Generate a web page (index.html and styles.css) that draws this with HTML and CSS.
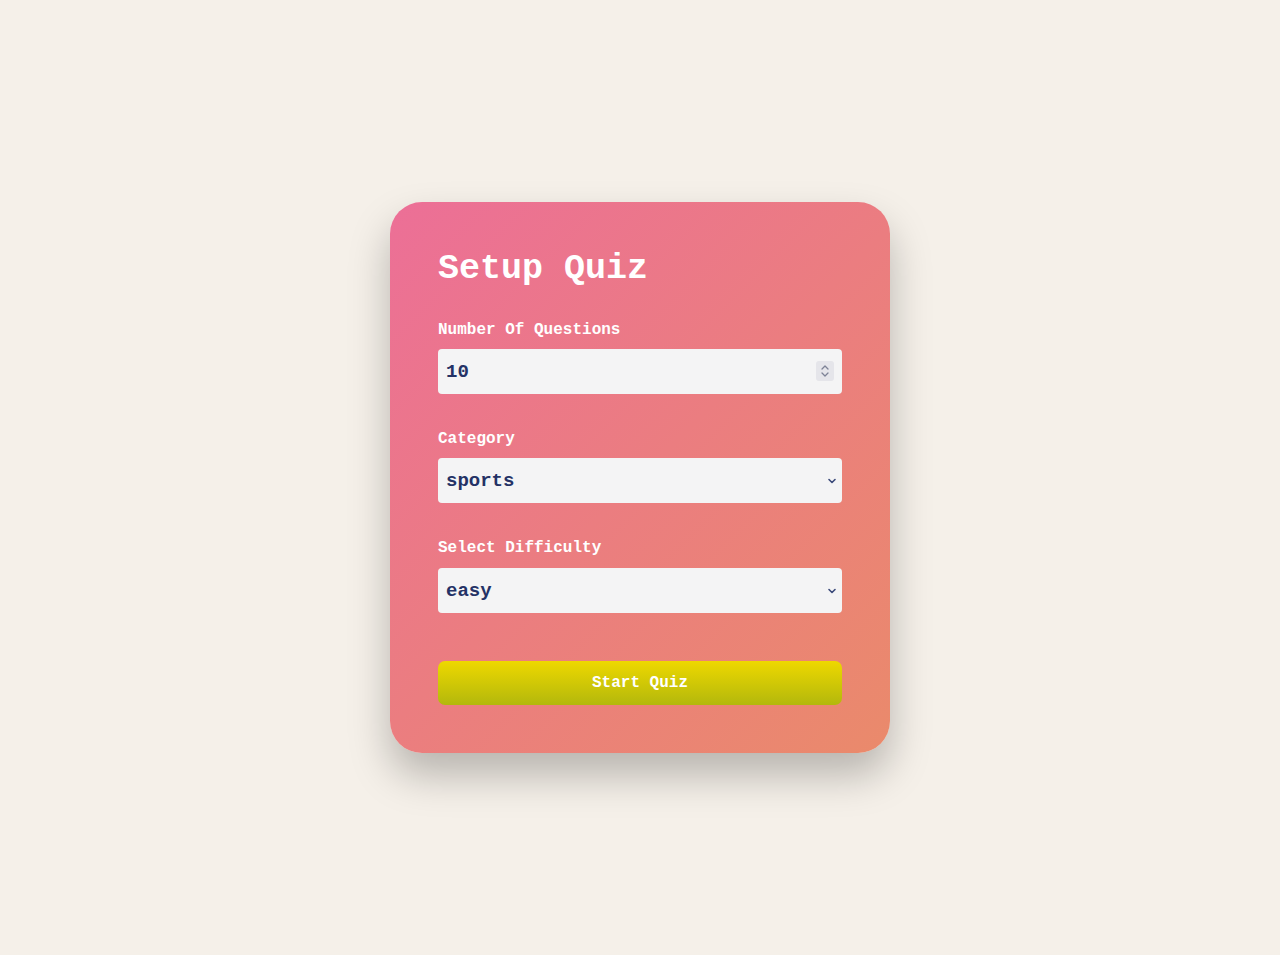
FILE: index.html
```html
<!DOCTYPE html>
<html lang="en">
<head>
<meta charset="utf-8">
<title>Setup Quiz</title>
<link rel="stylesheet" href="styles.css">
</head>
<body>
<main class="page">
  <form class="card">
    <h2 class="title">Setup Quiz</h2>
    <div class="group">
      <label class="label" for="amount">Number Of Questions</label>
      <div class="num-wrap">
        <input class="field number" type="number" id="amount" value="10" min="1" max="50">
        <span class="spin" aria-hidden="true">
          <svg width="10" height="14" viewBox="0 0 10 14"><path d="M2 5 L5 2 L8 5 M2 9 L5 12 L8 9" fill="none" stroke="#7d8296" stroke-width="1.3" stroke-linecap="round" stroke-linejoin="round"/></svg>
        </span>
      </div>
    </div>
    <div class="group">
      <label class="label" for="category">Category</label>
      <select class="field select" id="category">
        <option>sports</option>
        <option>history</option>
        <option>politics</option>
      </select>
    </div>
    <div class="group group-last">
      <label class="label" for="difficulty">Select Difficulty</label>
      <select class="field select" id="difficulty">
        <option>easy</option>
        <option>medium</option>
        <option>hard</option>
      </select>
    </div>
    <button type="button" class="start">Start Quiz</button>
  </form>
</main>
</body>
</html>
```
FILE: styles.css
```css
* { box-sizing: border-box; }
html, body { margin: 0; padding: 0; }
body {
  background: #f5f0e9;
  font-family: "Liberation Mono", "DejaVu Sans Mono", monospace;
  color: #fff;
}
.page {
  min-height: 955px;
  display: flex;
  align-items: center;
  justify-content: center;
}
.card {
  width: 500px;
  padding: 48px;
  border-radius: 32px;
  background: linear-gradient(135deg, #ec6f97 0%, #eb7d80 50%, #ea8a6b 100%);
  box-shadow: 0 22px 40px rgba(0, 0, 0, 0.25);
}
.title {
  margin: 0 0 30px;
  font-size: 35px;
  line-height: 38px;
  font-weight: 700;
}
.group { margin-bottom: 33px; }
.group-last { margin-bottom: 0; }
.label {
  display: block;
  font-size: 16px;
  line-height: 24px;
  font-weight: 700;
  margin-bottom: 7px;
}
.group-last .label { margin-bottom: 8px; }
.field {
  display: block;
  width: 100%;
  height: 45px;
  border: none;
  border-radius: 4px;
  background: #f4f4f5;
  color: #243266;
  font-family: inherit;
  font-size: 19px;
  font-weight: 700;
  padding: 0 8px;
  outline: none;
}
.num-wrap { position: relative; }
.number { -moz-appearance: textfield; }
.number::-webkit-inner-spin-button,
.number::-webkit-outer-spin-button {
  -webkit-appearance: none;
  margin: 0;
}
.spin {
  position: absolute;
  right: 8px;
  top: 12px;
  width: 18px;
  height: 20px;
  border-radius: 3px;
  background: #e5e5ea;
  display: flex;
  align-items: center;
  justify-content: center;
  pointer-events: none;
}
.select {
  appearance: none;
  -webkit-appearance: none;
  padding: 0 24px 0 8px;
  background-image: url("data:image/svg+xml;utf8,<svg xmlns='http://www.w3.org/2000/svg' width='10' height='10' viewBox='0 0 10 10'><path d='M2 3.5 L5 6.5 L8 3.5' fill='none' stroke='%233b4a7a' stroke-width='1.6' stroke-linecap='round' stroke-linejoin='round'/></svg>");
  background-repeat: no-repeat;
  background-position: right 5px center;
  background-size: 10px 10px;
}
.start {
  display: block;
  width: 100%;
  height: 44px;
  margin-top: 48px;
  border: none;
  border-radius: 7px;
  background: linear-gradient(180deg, #eed800 0%, #b3b80c 100%);
  color: #fff;
  font-family: inherit;
  font-size: 16px;
  font-weight: 700;
  cursor: pointer;
}
```
